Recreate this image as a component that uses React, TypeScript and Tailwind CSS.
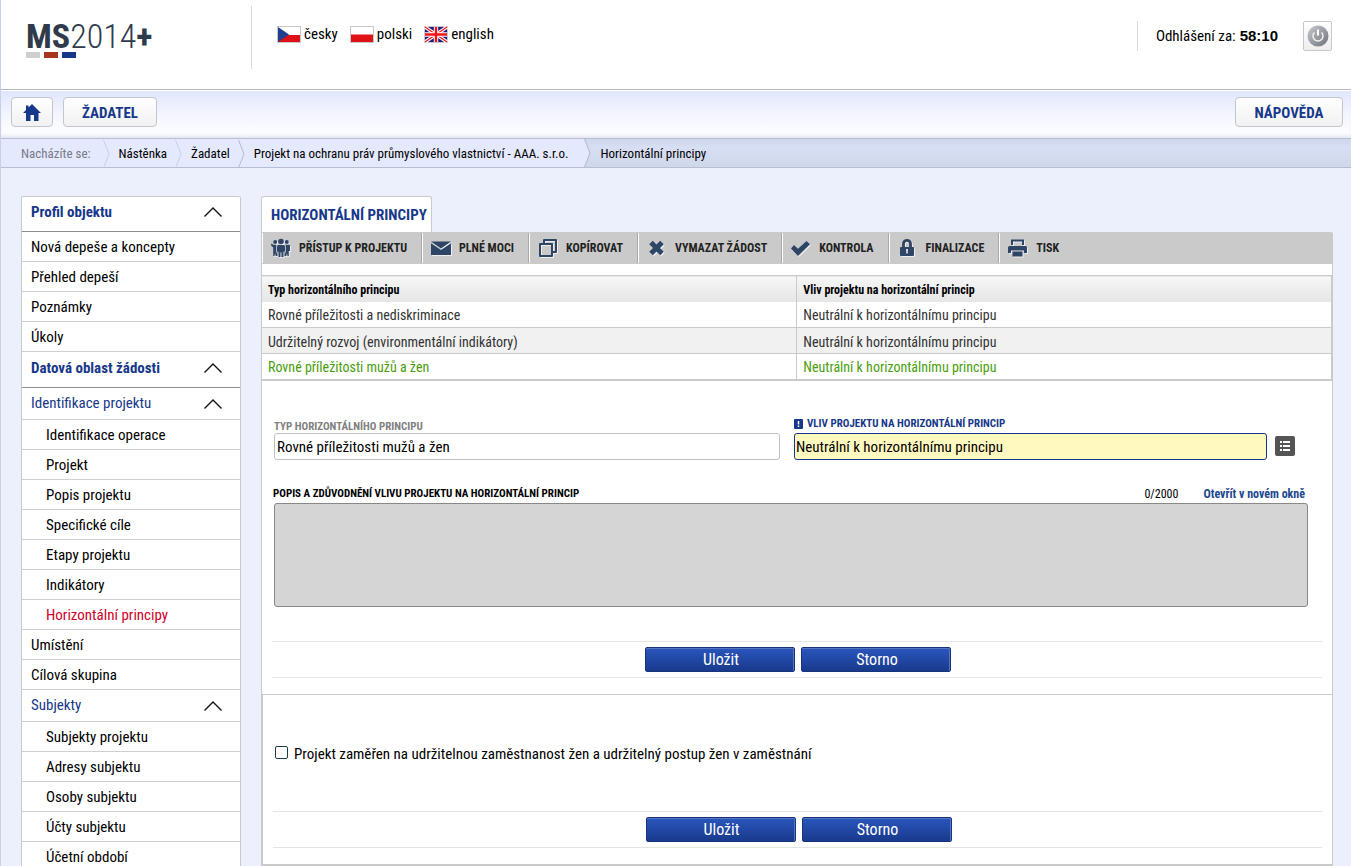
import type { ReactNode } from "react"

type MenuItem = {
  label: string
  kind: "heading" | "group" | "item" | "child"
  active?: boolean
}

const menu: MenuItem[] = [
  { label: "Profil objektu", kind: "heading" },
  { label: "Nová depeše a koncepty", kind: "item" },
  { label: "Přehled depeší", kind: "item" },
  { label: "Poznámky", kind: "item" },
  { label: "Úkoly", kind: "item" },
  { label: "Datová oblast žádosti", kind: "heading" },
  { label: "Identifikace projektu", kind: "group" },
  { label: "Identifikace operace", kind: "child" },
  { label: "Projekt", kind: "child" },
  { label: "Popis projektu", kind: "child" },
  { label: "Specifické cíle", kind: "child" },
  { label: "Etapy projektu", kind: "child" },
  { label: "Indikátory", kind: "child" },
  { label: "Horizontální principy", kind: "child", active: true },
  { label: "Umístění", kind: "item" },
  { label: "Cílová skupina", kind: "item" },
  { label: "Subjekty", kind: "group" },
  { label: "Subjekty projektu", kind: "child" },
  { label: "Adresy subjektu", kind: "child" },
  { label: "Osoby subjektu", kind: "child" },
  { label: "Účty subjektu", kind: "child" },
  { label: "Účetní období", kind: "child" },
]

const rows = [
  { type: "Rovné příležitosti a nediskriminace", effect: "Neutrální k horizontálnímu principu", style: "bg-white text-[#333]" },
  { type: "Udržitelný rozvoj (environmentální indikátory)", effect: "Neutrální k horizontálnímu principu", style: "bg-[#f1f1f1] text-[#333]" },
  { type: "Rovné příležitosti mužů a žen", effect: "Neutrální k horizontálnímu principu", style: "bg-white text-[#4a9e0c]" },
]

function Chevron() {
  return (
    <svg width="20" height="12" viewBox="0 0 20 12" fill="none" stroke="#111" strokeWidth="1.4">
      <path d="M1.5 10.5 10 2l8.500 8.500" />
    </svg>
  )
}

function Logo() {
  return (
    <a href="#" className="block w-[250px] pl-[25px] text-[#2f3b4b]">
      <span className="block h-8 text-[34px] leading-8">
        <b>MS</b>
        <span className="font-light">2014</span>
        <b>+</b>
      </span>
      <span className="flex gap-1">
        <span className="h-1.5 w-3.5 bg-[#d0cece]" />
        <span className="h-1.5 w-3.5 bg-[#a8351c]" />
        <span className="h-1.5 w-3.5 bg-[#17388a]" />
      </span>
    </a>
  )
}

function Flag({ children }: { children: ReactNode }) {
  return (
    <svg width="24" height="17" viewBox="0 0 24 17" className="shrink-0">
      <rect width="24" height="17" fill="#c8c8c8" />
      <rect x="1" y="1" width="22" height="15" fill="#fff" />
      {children}
    </svg>
  )
}

function CzechFlag() {
  return (
    <Flag>
      <path d="M1 9h22v7H1z" fill="#dc1218" />
      <path d="M1 1v15l11-7.500z" fill="#203f91" />
    </Flag>
  )
}

function PolishFlag() {
  return (
    <Flag>
      <path d="M1 8.500h22V16H1z" fill="#e01218" />
    </Flag>
  )
}

function BritishFlag() {
  return (
    <Flag>
      <path d="M1 1h22v15H1z" fill="#1c1c7c" />
      <path d="M1 1l22 15M23 1L1 16" stroke="#fff" strokeWidth="3.400" />
      <path d="M1 1l22 15M23 1L1 16" stroke="#f01818" strokeWidth="1.400" />
      <path d="M12 1v15M1 8.500h22" stroke="#fff" strokeWidth="4.400" />
      <path d="M12 1v15M1 8.500h22" stroke="#f81010" strokeWidth="2.400" />
    </Flag>
  )
}

function PowerIcon() {
  return (
    <svg width="22" height="22" viewBox="0 0 22 22" fill="none">
      <defs>
        <linearGradient id="power" x1="0" y1="0" x2="1" y2="1">
          <stop offset="0" stopColor="#c8cace" />
          <stop offset="1" stopColor="#6d737c" />
        </linearGradient>
      </defs>
      <circle cx="11" cy="11" r="10.500" fill="url(#power)" />
      <path d="M7.500 7.500a5 5 0 1 0 7 0" stroke="#f2f2f2" strokeWidth="1.500" />
      <path d="M11 4.500v6" stroke="#fff" strokeWidth="2" />
    </svg>
  )
}

function HomeIcon() {
  return (
    <svg width="18" height="17" viewBox="0 0 18 17" fill="#17388a" className="mb-0.5">
      <path d="M9 0 12 3 18 9H15.500V17H11V11H7.500V17H3V9H0L3 6V1.500H5.500V3.500Z" />
    </svg>
  )
}

function PeopleIcon() {
  return (
    <svg width="20" height="20" viewBox="0 0 20 20" fill="#2f4566">
      <circle cx="10" cy="3.500" r="2.800" />
      <circle cx="4.200" cy="4" r="2" />
      <circle cx="15.800" cy="4" r="2" />
      <path d="M6 8.500Q6 7 7.500 7h5Q14 7 14 8.500v5.300h-1.500V19h-2v-4.500h-1V19h-2v-5.200H6z" />
      <path d="M0 5.500 2.500 6.800H5.300v7.600h1.200V18H4.600l-.5-3-.6 3H2.200V9.500L.4 8zM19 7.800q0-1-1-1H14.700v7.600h-1.200V18h1.900l.5-3 .6 3h1.300v-5H19z" />
    </svg>
  )
}

function MailIcon() {
  return (
    <svg width="20" height="20" viewBox="0 0 20 20" fill="#2f4566">
      <path d="M0 3.500h20L10 10.500zM0 5.300l10 6.700 10-6.700V17H0z" />
    </svg>
  )
}

function CopyIcon() {
  return (
    <svg width="20" height="20" viewBox="0 0 20 20" fill="none" stroke="#2f4566" strokeWidth="2">
      <path d="M6 5V2h12v12h-3" strokeLinejoin="round" />
      <path d="M2 6h12v12H2z" strokeLinejoin="round" />
    </svg>
  )
}

function DeleteIcon() {
  return (
    <svg width="20" height="20" viewBox="0 0 20 20" fill="none" stroke="#2f4566" strokeWidth="5">
      <path d="M4 4.500l11 11M15 4.500l-11 11" />
    </svg>
  )
}

function CheckIcon() {
  return (
    <svg width="20" height="20" viewBox="0 0 20 20" fill="#2f4566">
      <path d="M0 10.500 3 7l4 3.800L15.500 3 19 6.200 7 18z" />
    </svg>
  )
}

function LockIcon() {
  return (
    <svg width="20" height="20" viewBox="0 0 20 20" fill="none">
      <path d="M5.500 10V5.800a3.500 3.500 0 0 1 7 0V10" stroke="#2f4566" strokeWidth="2.800" />
      <rect x="2" y="9" width="14" height="9" rx="1" fill="#2f4566" />
      <path d="M9 11v4.500M8 12h2" stroke="#e0e0e0" strokeWidth="1.600" />
    </svg>
  )
}

function PrintIcon() {
  return (
    <svg width="20" height="20" viewBox="0 0 20 20" fill="#2f4566">
      <path d="M3 7V1.500h13V7h-2V3.500H5V7z" />
      <path d="M1.500 8h16q1.500 0 1.500 1.500V15h-3v-2.500H3V15H0V9.500Q0 8 1.500 8z" />
      <path d="M4.500 13.500h10v5h-10z" />
    </svg>
  )
}

const tools = [
  { label: "Přístup k projektu", icon: <PeopleIcon /> },
  { label: "Plné moci", icon: <MailIcon /> },
  { label: "Kopírovat", icon: <CopyIcon /> },
  { label: "Vymazat žádost", icon: <DeleteIcon /> },
  { label: "Kontrola", icon: <CheckIcon /> },
  { label: "Finalizace", icon: <LockIcon /> },
  { label: "Tisk", icon: <PrintIcon /> },
]

function Separator({ color }: { color: string }) {
  return (
    <svg width="8" height="28" viewBox="0 0 8 28" fill="none" stroke={color}>
      <path d="M.5 0 6 14 .5 28" />
    </svg>
  )
}

function NavButton({ children, label, className }: { children: ReactNode; label?: string; className: string }) {
  return (
    <button
      aria-label={label}
      className={`flex h-[30px] items-center justify-center rounded-sm border border-[#c4c6cc] bg-linear-to-b from-white to-[#f1f1f1] pt-0.5 font-bold text-[#17388a] ${className}`}
    >
      {children}
    </button>
  )
}

function FormButtons() {
  return (
    <div className="mx-2.5 flex h-[37px] justify-center gap-1.5 border-y border-[#e4e4e4] pt-[5px] pl-0.5">
      {["Uložit", "Storno"].map((label) => (
        <button
          key={label}
          className="h-[25px] w-[150px] rounded-xs border border-[#17347d] bg-linear-to-b from-[#2a56bd] to-[#183a8c] pt-0.5 pl-0.5 text-base leading-5 text-white shadow-[inset_0_1px_0_#5876bf,inset_-1px_0_0_#5876bf]"
        >
          {label}
        </button>
      ))}
    </div>
  )
}

function Header() {
  return (
    <header className="flex h-[89px] items-start bg-white">
      <div className="mt-5">
        <Logo />
      </div>
      <div className="mt-1.5 flex h-[63px] items-center gap-3 border-l border-[#d8d8d8] pb-1.5 pl-[25px]">
        <a href="#" className="flex items-center gap-[3px]"><CzechFlag />česky</a>
        <a href="#" className="flex items-center gap-[3px]"><PolishFlag />polski</a>
        <a href="#" className="flex items-center gap-[3px]"><BritishFlag />english</a>
      </div>
      <div className="mt-[21px] mr-[19px] ml-auto flex h-[30px] items-center border-l border-[#d8d8d8] pl-[18px]">
        <span className="mr-1">Odhlášení za:</span>
        <b className="font-['Liberation_Sans',sans-serif] text-[15px]">58:10</b>
        <button
          aria-label="Odhlásit"
          className="ml-[25px] flex h-[30px] w-[29px] items-center justify-center rounded-xs border border-[#c8c8c8] bg-linear-to-b from-white to-[#eee]"
        >
          <PowerIcon />
        </button>
      </div>
    </header>
  )
}

function Breadcrumbs() {
  return (
    <nav className="flex h-[30px] items-center border-y border-[#b9bfd2] bg-linear-to-b from-[#cdd6ec] via-[#d8dff4] via-30% to-[#cfd7eb] text-[13px]">
      <div className="flex h-7 items-center gap-2 bg-[#e4e9fd] pt-px pl-5">
        <span className="mr-1 text-[#777c88]">Nacházíte se:</span>
        <Separator color="#c8cfe4" />
        <a href="#">Nástěnka</a>
        <Separator color="#c8cfe4" />
        <a href="#">Žadatel</a>
        <Separator color="#b4bbcf" />
        <a href="#" className="mr-4">Projekt na ochranu práv průmyslového vlastnictví - AAA. s.r.o.</a>
      </div>
      <svg width="8" height="28" viewBox="0 0 8 28" className="mr-2">
        <path d="M0 0h.5L6 14 .5 28H0z" fill="#e4e9fd" />
        <path d="M.5 0 6 14 .5 28" fill="none" stroke="#b0b8ce" />
      </svg>
      <span className="pt-px">Horizontální principy</span>
    </nav>
  )
}

function Sidebar() {
  const styles = {
    heading: "h-9 border-[#8c8c8c] pl-[9px] pb-[3px] font-bold text-[#17388a]",
    group: "h-8 border-[#cfcfcf] pl-[9px] text-[#17388a]",
    item: "h-[30px] border-[#cfcfcf] pt-0.5 pl-[9px]",
    child: "h-[30px] border-[#cfcfcf] pt-0.5 pl-6",
  }
  return (
    <nav className="w-[220px] shrink-0 rounded-t-xs border border-t-0 border-[#cacaca] bg-white shadow-[inset_0_1px_0_#cacaca]">
      {menu.map((item) => (
        <a
          key={item.label}
          href="#"
          className={`flex items-center justify-between border-b pr-[17px] ${styles[item.kind]} ${item.active ? "text-[#cf0027]" : ""}`}
        >
          {item.label}
          {(item.kind === "heading" || item.kind === "group") && <Chevron />}
        </a>
      ))}
    </nav>
  )
}

function PrinciplesTable() {
  return (
    <table className="w-full table-fixed border-collapse border-b-2 border-[#cacaca] text-left text-sm">
      <thead>
        <tr className="h-[26px] border-t border-[#cacaca] bg-linear-to-b from-[#f6f6f6] to-[#e6e6e6] text-[12px] text-black">
          <th className="border-r border-[#cacaca] px-1.5 pt-1">Typ horizontálního principu</th>
          <th className="border-r border-[#cacaca] px-1.5 pt-1">Vliv projektu na horizontální princip</th>
        </tr>
      </thead>
      <tbody>
        {rows.map((row) => (
          <tr key={row.type} className={`h-[26px] border-b border-[#cacaca] ${row.style}`}>
            <td className="border-r border-[#cacaca] px-1.5 pt-0.5">{row.type}</td>
            <td className="border-r border-[#cacaca] px-1.5 pt-0.5">{row.effect}</td>
          </tr>
        ))}
      </tbody>
    </table>
  )
}

function PrincipleForm() {
  return (
    <form className="pt-[37px]">
      <div className="flex items-end pr-[37px] pl-3">
        <div className="w-[506px] shrink">
          <label htmlFor="type" className="block text-[11px] leading-3 font-bold uppercase text-[#808080]">
            Typ horizontálního principu
          </label>
          <input
            id="type"
            readOnly
            defaultValue="Rovné příležitosti mužů a žen"
            className="h-[27px] w-full rounded-[3px] border border-[#c0c0c0] px-0.5 pt-0.5"
          />
        </div>
        <div className="ml-3.5 flex-1">
          <label htmlFor="effect" className="flex items-center gap-1 pb-[3px] text-[11px] leading-3 font-bold uppercase text-[#17388a]">
            <svg width="9" height="10" viewBox="0 0 9 10">
              <rect width="9" height="10" rx="1" fill="#17388a" />
              <path d="M4.500 2v3.500M4.500 6.500v1.500" stroke="#fff" strokeWidth="1.500" />
            </svg>
            Vliv projektu na horizontální princip
          </label>
          <input
            id="effect"
            defaultValue="Neutrální k horizontálnímu principu"
            className="h-[27px] w-full rounded-[3px] border border-[#17388a] bg-[#fff9bf] px-px pt-0.5"
          />
        </div>
        <button type="button" aria-label="Vybrat" className="mb-1 ml-2 flex h-5 w-5 items-center justify-center rounded-xs bg-[#555]">
          <svg width="10" height="10" viewBox="0 0 10 10" fill="#fff">
            <path d="M0 0h2v2H0zM3 0h7v2H3zM0 4h2v2H0zM3 4h7v2H3zM0 8h2v2H0zM3 8h7v2H3z" />
          </svg>
        </button>
      </div>
      <div className="mt-[26px] flex h-[17px] items-center pr-[27px] pl-[11px] text-[12px]">
        <label htmlFor="description" className="text-[11px] font-bold uppercase">
          Popis a zdůvodnění vlivu projektu na horizontální princip
        </label>
        <span className="ml-auto">0/2000</span>
        <a href="#" className="ml-[25px] font-bold text-[#1b4890]">Otevřít v novém okně</a>
      </div>
      <div className="pr-6 pl-3">
        <textarea id="description" className="block h-[104px] w-full resize-none rounded-[3px] border border-[#888] bg-[#d5d5d5]" />
      </div>
      <div className="mt-[34px] mb-4">
        <FormButtons />
      </div>
    </form>
  )
}

export default function App() {
  return (
    <div className="min-h-screen border-l border-[#c8d0ec] bg-[#ecf0fd] font-['Roboto_Condensed','Liberation_Sans',sans-serif] text-[15px] text-black">
      <Header />
      <div className="flex h-[49px] items-start justify-between border-t border-[#b4b6c2] bg-linear-to-b from-[#dfe6fd] via-[#f3f5fe] to-white pt-[7px] pr-2 pl-2.5 shadow-[inset_0_1px_0_#fff,inset_0_-4px_4px_-2px_#dde2f0]">
        <div className="flex gap-2.5">
          <NavButton label="Domů" className="w-[42px]"><HomeIcon /></NavButton>
          <NavButton className="w-[94px]">ŽADATEL</NavButton>
        </div>
        <NavButton className="w-[108px]">NÁPOVĚDA</NavButton>
      </div>
      <Breadcrumbs />

      <div className="flex items-start gap-5 pt-7 pr-[18px] pl-5">
        <Sidebar />
        <main className="min-w-0 flex-1">
          <h1 className="h-9 w-[171px] rounded-t-[3px] border border-b-0 border-[#cacaca] bg-white pl-[9px] leading-9 font-bold whitespace-nowrap text-[#17388a]">
            HORIZONTÁLNÍ PRINCIPY
          </h1>
          <div className="flex h-8 rounded-tr-xs border-l border-[#cacaca] bg-[#cacaca] py-px">
            {tools.map((tool, i) => (
              <button
                key={tool.label}
                className={`flex items-center gap-2 border-l border-l-white pr-3.5 pl-2 text-[12px] font-bold uppercase text-[#222] ${i < tools.length - 1 ? "border-r border-r-[#a8a8a8]" : ""}`}
              >
                <span className="drop-shadow-[1px_1px_0_#eee]">{tool.icon}</span>
                {tool.label}
              </button>
            ))}
          </div>
          <div className="border-x border-[#cacaca] bg-white pt-[11px]">
            <PrinciplesTable />
            <PrincipleForm />
            <form className="border-t border-b-2 border-l border-[#cacaca]">
              <div className="flex h-[116px] items-center gap-1.5 pl-3">
                <input id="women" type="checkbox" className="h-[13px] w-[13px] appearance-none rounded-xs border border-[#1c4048] bg-[#fffefa]" />
                <label htmlFor="women" className="pt-1">
                  Projekt zaměřen na udržitelnou zaměstnanost žen a udržitelný postup žen v zaměstnání
                </label>
              </div>
              <div className="mb-4">
                <FormButtons />
              </div>
            </form>
            <div className="h-5" />
          </div>
        </main>
      </div>
    </div>
  )
}
